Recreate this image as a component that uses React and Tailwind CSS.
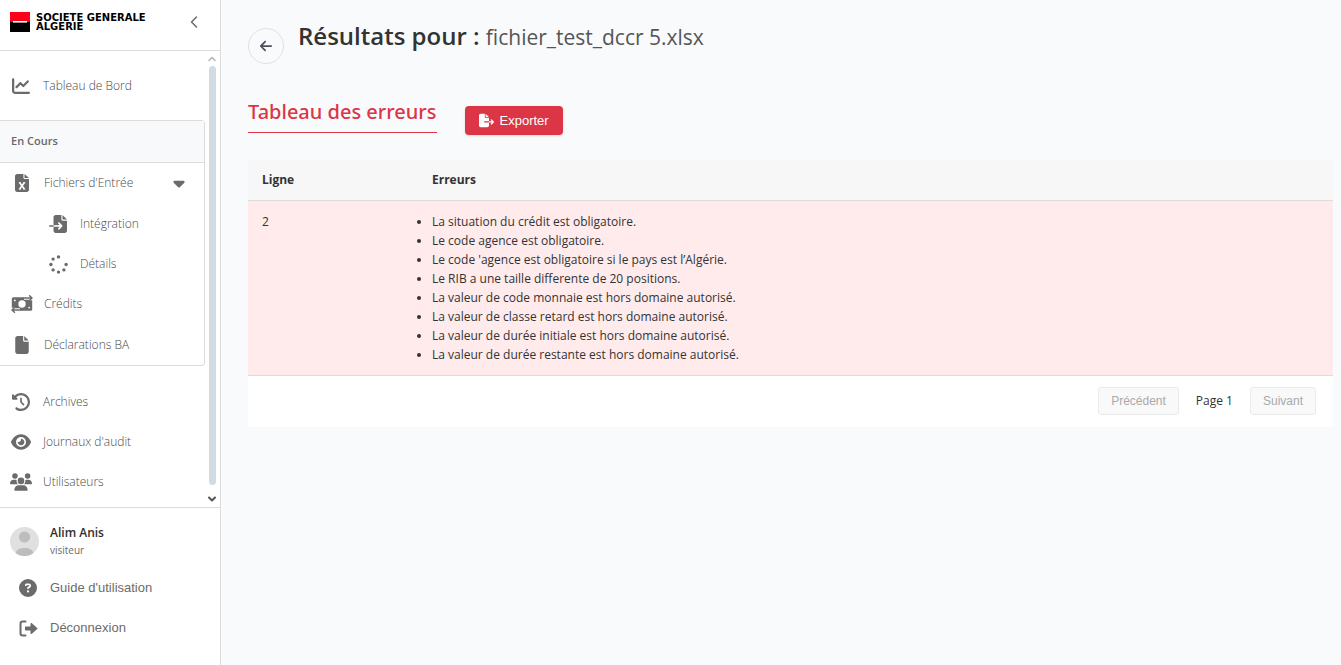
import React from "react";
import {
  FaEye,
  FaUsers,
  FaCaretDown,
  FaChartLine,
  FaCircleQuestion,
  FaArrowLeft,
  FaFile,
  FaFileExport,
  FaFileImport,
  FaClockRotateLeft,
} from "react-icons/fa6";
import { ChevronLeft, ChevronUp, ChevronDown } from "lucide-react";

const errors = [
  "La situation du crédit est obligatoire.",
  "Le code agence est obligatoire.",
  "Le code 'agence est obligatoire si le pays est l’Algérie.",
  "Le RIB a une taille differente de 20 positions.",
  "La valeur de code monnaie est hors domaine autorisé.",
  "La valeur de classe retard est hors domaine autorisé.",
  "La valeur de durée initiale est hors domaine autorisé.",
  "La valeur de durée restante est hors domaine autorisé.",
];

function Logo() {
  return (
    <a href="#" className="flex items-center gap-1.5 text-black">
      <svg width="20" height="20" viewBox="0 0 20 20" aria-hidden="true">
        <rect width="20" height="10" fill="#ff0018" />
        <rect y="10" width="20" height="10" fill="#000" />
        <rect x="3" y="9" width="14" height="1.6" fill="#fff" />
      </svg>
      <span className="flex flex-col font-['DejaVu_Sans',sans-serif] text-[10px] leading-[9px] font-bold whitespace-nowrap">
        <span>SOCIETE GENERALE</span>
        <span>ALGERIE</span>
      </span>
    </a>
  );
}

function NavLink({ icon, label, className }) {
  return (
    <a href="#" className={"flex items-center gap-2.5 " + className}>
      <span className="flex w-6 shrink-0 justify-center text-[#6b6b6b]">{icon}</span>
      <span>{label}</span>
    </a>
  );
}

function ExcelIcon() {
  return (
    <svg width="14" height="18" viewBox="0 0 14 18" aria-hidden="true">
      <path d="M2.2 0h6.2v3.6c0 .8.5 1.3 1.3 1.3H14v10.9c0 1.2-1 2.2-2.2 2.2H2.2C1 18 0 17 0 15.800V2.200C0 1 1 0 2.200 0z" fill="currentColor" />
      <path d="M9.500 0 14 4H9.500z" fill="currentColor" />
      <path d="m4.700 8.800 4.600 6.200M9.300 8.800 4.700 15" fill="none" stroke="#fff" strokeWidth="1.600" />
      <path d="M3.800 8.700h2.100M8.200 8.700h2.100M3.800 15.100h2.100M8.200 15.100h2.100" fill="none" stroke="#fff" strokeWidth="1" />
    </svg>
  );
}

function DotsIcon() {
  return (
    <svg width="19" height="19" viewBox="0 0 19 19" fill="currentColor" aria-hidden="true">
      <circle cx="9.500" cy="1.900" r="1.700" />
      <circle cx="4.100" cy="4.100" r="1.700" />
      <circle cx="1.900" cy="9.500" r="1.700" />
      <circle cx="4.100" cy="14.900" r="1.700" />
      <circle cx="9.500" cy="17.100" r="1.700" />
      <circle cx="14.900" cy="14.900" r="1.700" />
      <circle cx="17.100" cy="9.500" r="1.700" />
    </svg>
  );
}

function TransferIcon() {
  return (
    <svg width="22" height="18" viewBox="0 0 22 18" aria-hidden="true">
      <rect x="0.8" y="2.2" width="20.4" height="13.6" rx="1.6" fill="currentColor" />
      <circle cx="11" cy="9" r="3.7" fill="#fff" />
      <circle cx="3.8" cy="5.4" r="0.9" fill="#fff" />
      <circle cx="18.2" cy="12.6" r="0.9" fill="#fff" />
      <path d="M13 0h9v5.200h-2.400l-1 .8-.8-1.200H13z" fill="#fff" />
      <path d="M9 18H0v-5.200h2.400l1-.8.8 1.200H9z" fill="#fff" />
      <path d="M13 3h8M18.6.8 21 3l-2.4 2.2M9 15H1m2.4-2.2L1 15l2.4 2.2" fill="none" stroke="currentColor" strokeWidth="1.5" strokeLinecap="round" strokeLinejoin="round" />
    </svg>
  );
}

function SignOutIcon() {
  return (
    <svg width="19" height="17" viewBox="0 0 19 17" aria-hidden="true">
      <path d="M6.5 1.5H3.8A2.3 2.3 0 0 0 1.5 3.8v9.4a2.3 2.3 0 0 0 2.3 2.3h2.7" fill="none" stroke="currentColor" strokeWidth="2" strokeLinecap="round" />
      <path d="M7 6.5h4.5V3.8c0-.8.9-1.1 1.4-.6l5.3 4.7c.4.3.4.9 0 1.2l-5.3 4.7c-.5.5-1.4.2-1.4-.6v-2.7H7c-.6 0-1-.4-1-1v-2c0-.6.4-1 1-1z" fill="currentColor" />
    </svg>
  );
}

function Sidebar() {
  return (
    <aside className="flex w-[221px] shrink-0 flex-col border-r border-[#dcdcdc] bg-white text-[#6b6b6b]">
      <div className="flex h-[51px] items-start justify-between border-b border-[#dcdcdc] pt-3 pr-4 pl-2.5">
        <Logo />
        <button type="button" aria-label="Réduire le menu">
          <ChevronLeft size={20} strokeWidth={1.8} />
        </button>
      </div>
      <div className="flex h-[457px] border-b border-[#dcdcdc]">
        <nav className="min-w-0 flex-1 pt-[15px] text-[12px] font-light text-[#4a4a4a]">
          <NavLink icon={<FaChartLine size={18} />} label="Tableau de Bord" className="h-10 pl-[9px]" />
          <section className="mt-3.5 mr-px mb-4 rounded-r border border-l-0 border-[#dcdcdc]">
            <h2 className="flex h-[42px] items-center border-b border-[#dcdcdc] bg-[#f8f9fb] pl-[11px] text-[11px] font-semibold text-[#686868]">
              En Cours
            </h2>
            <div className="flex h-[202px] flex-col">
              <button type="button" className="flex w-full flex-1 items-center gap-2.5 pr-4 pl-2.5">
                <span className="flex w-6 justify-center text-[#6b6b6b]"><ExcelIcon /></span>
                <span>Fichiers d'Entrée</span>
                <FaCaretDown size={18} className="ml-auto text-[#6b6b6b]" />
              </button>
              <NavLink icon={<FaFileImport size={18} />} label="Intégration" className="flex-1 pl-[46px]" />
              <NavLink icon={<DotsIcon />} label="Détails" className="flex-1 pl-[46px]" />
              <NavLink icon={<TransferIcon />} label="Crédits" className="flex-1 pl-2.5" />
              <NavLink icon={<FaFile size={18} />} label="Déclarations BA" className="flex-1 pl-2.5" />
            </div>
          </section>
          <NavLink icon={<FaClockRotateLeft size={18} />} label="Archives" className="h-10 pl-[9px]" />
          <NavLink icon={<FaEye size={20} />} label="Journaux d'audit" className="h-10 pl-[9px]" />
          <NavLink icon={<FaUsers size={22} />} label="Utilisateurs" className="h-10 pl-[9px]" />
        </nav>
        <div className="mr-0.5 flex w-3 flex-col items-center py-0.5" aria-hidden="true">
          <ChevronUp size={12} strokeWidth={3} className="text-[#b5b5b5]" />
          <div className="mt-px mb-2 w-[7px] flex-1 rounded-full bg-[#d0dbe4]" />
          <ChevronDown size={12} strokeWidth={4} className="text-[#555]" />
        </div>
      </div>
      <div className="flex items-center gap-[11px] pt-4 pl-2.5">
        <svg width="29" height="29" viewBox="0 0 29 29" aria-hidden="true">
          <circle cx="14.5" cy="14.5" r="14.5" fill="#e0e0e0" />
          <circle cx="14.5" cy="10" r="5.6" fill="#bdbdbd" />
          <path d="M5.5 26a9.2 6.2 0 0 1 18 0 14.5 14.5 0 0 1-18 0z" fill="#bdbdbd" />
        </svg>
        <div>
          <p className="text-[12px] leading-[18px] font-semibold text-[#2f2f2f]">Alim Anis</p>
          <p className="text-[10px] leading-4">visiteur</p>
        </div>
      </div>
      <div className="mt-2.5 font-['Liberation_Sans',Arial,sans-serif] text-[13px]">
        <NavLink icon={<FaCircleQuestion size={18} />} label="Guide d'utilisation" className="h-10 pl-4" />
        <NavLink icon={<SignOutIcon />} label="Déconnexion" className="h-10 pl-4" />
      </div>
    </aside>
  );
}

function PageButton({ children }) {
  return (
    <button
      type="button"
      disabled
      className="h-7 rounded-[3px] border border-[#eaeaea] bg-[#f9f9f9] px-3 font-['Liberation_Sans',Arial,sans-serif] text-[12px] text-[#a9a9a9]"
    >
      {children}
    </button>
  );
}

export default function App() {
  return (
    <div className="flex min-h-screen bg-[#f9fafc] font-['Open_Sans','Noto_Sans',sans-serif] text-[#333]">
      <Sidebar />
      <main className="min-w-0 flex-1 pt-5 pr-2 pl-[27px]">
        <header className="flex items-start gap-3.5">
          <button
            type="button"
            aria-label="Retour"
            className="mt-2 flex size-9 items-center justify-center rounded-full border border-[#e0e0e0] text-[#495057]"
          >
            <FaArrowLeft size={14} />
          </button>
          <h1 className="text-[24px] leading-8 font-semibold">
            Résultats pour : <span className="text-[21px] font-normal text-[#555]">fichier_test_dccr 5.xlsx</span>
          </h1>
        </header>
        <div className="mt-8 flex items-start gap-7">
          <h2 className="border-b border-[#dc3545] pb-1 font-['Noto_Sans','Open_Sans',sans-serif] text-[20px] leading-8 font-medium text-[#dc3545]">
            Tableau des erreurs
          </h2>
          <button
            type="button"
            className="mt-2.5 flex h-[29px] items-center gap-1.5 rounded bg-[#dc3545] px-3.5 font-['Liberation_Sans',Arial,sans-serif] text-[13px] text-white shadow-sm"
          >
            <FaFileExport size={15} />
            Exporter
          </button>
        </div>
        <section className="mt-[25px] bg-white">
          <table className="w-full table-fixed border-collapse text-left text-[12px]">
            <thead className="bg-[#f7f7f7]">
              <tr className="h-10 border-b border-[#dcdcdc]">
                <th scope="col" className="w-[170px] px-3.5 font-bold">Ligne</th>
                <th scope="col" className="px-3.5 font-bold">Erreurs</th>
              </tr>
            </thead>
            <tbody>
              <tr className="border-b border-[#dcdcdc] bg-[#ffebeb]">
                <td className="px-3.5 py-[11px] align-top leading-[19px]">2</td>
                <td className="px-3.5 py-[11px] align-top">
                  <ul className="list-disc leading-[19px]">
                    {errors.map((error) => (
                      <li key={error}>{error}</li>
                    ))}
                  </ul>
                </td>
              </tr>
            </tbody>
          </table>
          <div className="flex h-[51px] items-center justify-end gap-[17px] pr-[17px]">
            <PageButton>Précédent</PageButton>
            <span className="text-[12px]">Page 1</span>
            <PageButton>Suivant</PageButton>
          </div>
        </section>
      </main>
    </div>
  );
}
